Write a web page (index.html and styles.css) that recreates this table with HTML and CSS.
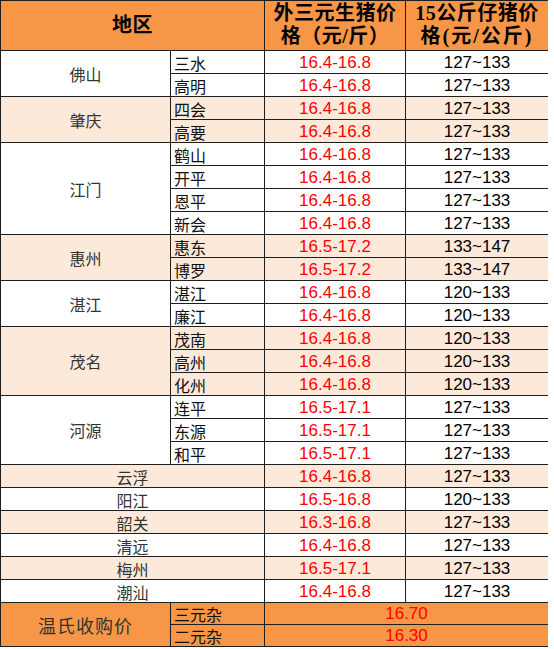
FILE: index.html
```html
<!DOCTYPE html>
<html lang="zh-CN">
<head>
<meta charset="utf-8">
<title>生猪价格</title>
<link rel="stylesheet" href="styles.css">
</head>
<body>
<div class="sheet">
  <div class="hd c12">地区</div>
  <div class="hd"><span>外三元生猪价</span><span>格（元/斤）</span></div>
  <div class="hd"><span>15公斤仔猪价</span><span class="wide">格(元/公斤)</span></div>

  <div class="city r2 w">佛山</div>
  <div class="town w">三水</div><div class="p w">16.4-16.8</div><div class="n w">127~133</div>
  <div class="town w">高明</div><div class="p w">16.4-16.8</div><div class="n w">127~133</div>

  <div class="city r2 s">肇庆</div>
  <div class="town s">四会</div><div class="p s">16.4-16.8</div><div class="n s">127~133</div>
  <div class="town s">高要</div><div class="p s">16.4-16.8</div><div class="n s">127~133</div>

  <div class="city r4 w">江门</div>
  <div class="town w">鹤山</div><div class="p w">16.4-16.8</div><div class="n w">127~133</div>
  <div class="town w">开平</div><div class="p w">16.4-16.8</div><div class="n w">127~133</div>
  <div class="town w">恩平</div><div class="p w">16.4-16.8</div><div class="n w">127~133</div>
  <div class="town w">新会</div><div class="p w">16.4-16.8</div><div class="n w">127~133</div>

  <div class="city r2 s">惠州</div>
  <div class="town s">惠东</div><div class="p s">16.5-17.2</div><div class="n s">133~147</div>
  <div class="town s">博罗</div><div class="p s">16.5-17.2</div><div class="n s">133~147</div>

  <div class="city r2 w">湛江</div>
  <div class="town w">湛江</div><div class="p w">16.4-16.8</div><div class="n w">120~133</div>
  <div class="town w">廉江</div><div class="p w">16.4-16.8</div><div class="n w">120~133</div>

  <div class="city r3 s">茂名</div>
  <div class="town s">茂南</div><div class="p s">16.4-16.8</div><div class="n s">120~133</div>
  <div class="town s">高州</div><div class="p s">16.4-16.8</div><div class="n s">120~133</div>
  <div class="town s">化州</div><div class="p s">16.4-16.8</div><div class="n s">120~133</div>

  <div class="city r3 w">河源</div>
  <div class="town w">连平</div><div class="p w">16.5-17.1</div><div class="n w">127~133</div>
  <div class="town w">东源</div><div class="p w">16.5-17.1</div><div class="n w">127~133</div>
  <div class="town w">和平</div><div class="p w">16.5-17.1</div><div class="n w">127~133</div>

  <div class="region c12 s">云浮</div><div class="p s">16.4-16.8</div><div class="n s">127~133</div>
  <div class="region c12 w">阳江</div><div class="p w">16.5-16.8</div><div class="n w">120~133</div>
  <div class="region c12 s">韶关</div><div class="p s">16.3-16.8</div><div class="n s">127~133</div>
  <div class="region c12 w">清远</div><div class="p w">16.4-16.8</div><div class="n w">127~133</div>
  <div class="region c12 s">梅州</div><div class="p s">16.5-17.1</div><div class="n s">127~133</div>
  <div class="region c12 w">潮汕</div><div class="p w">16.4-16.8</div><div class="n w">127~133</div>

  <div class="buyer r2 o">温氏收购价</div>
  <div class="town o">三元杂</div><div class="p c34 o">16.70</div>
  <div class="town o">二元杂</div><div class="p c34 o">16.30</div>
</div>
</body>
</html>
```
FILE: styles.css
```css
html, body {
  margin: 0;
  padding: 0;
  background: #ffffff;
}

.sheet {
  display: grid;
  grid-template-columns: 169px 93px 140px 142px;
  grid-template-rows: 49px repeat(24, 22px) 21px 21px;
  gap: 1px;
  padding: 1px;
  width: 546px;
  background: #1e1e1e;
  font-family: "Noto Sans CJK SC", sans-serif;
  font-size: 16px;
  color: #111;
}

.sheet > div {
  display: flex;
  align-items: flex-end;
  justify-content: center;
  line-height: 18px;
  padding-bottom: 1px;
  box-sizing: border-box;
  white-space: nowrap;
}

.w { background: #ffffff; }
.s { background: #fde9d9; }
.o { background: #f79646; }

.c12 { grid-column: span 2; }
.c34 { grid-column: span 2; }
.r2 { grid-row: span 2; }
.r3 { grid-row: span 3; }
.r4 { grid-row: span 4; }

.sheet > .hd {
  background: #f79646;
  flex-direction: column;
  align-items: center;
  justify-content: center;
  font-family: "Liberation Serif", "Noto Sans CJK SC", serif;
  font-weight: 700;
  font-size: 20px;
  line-height: 23px;
  color: #000;
  padding: 0 0 1px;
  letter-spacing: 0.5px;
}

.sheet > .hd .wide {
  letter-spacing: 2px;
}

.sheet > .city,
.sheet > .buyer {
  align-items: center;
  color: #333;
  padding-bottom: 0;
}

.sheet > .buyer {
  font-size: 18px;
  letter-spacing: 1px;
}

.sheet > .town {
  justify-content: flex-start;
  padding-left: 3px;
}

.sheet > .region {
  color: #333;
}

.p, .n {
  font-family: "Liberation Sans", "Noto Sans CJK SC", sans-serif;
  font-size: 17px;
}

.p { color: #ff0000; }
.n { color: #000; }
```
